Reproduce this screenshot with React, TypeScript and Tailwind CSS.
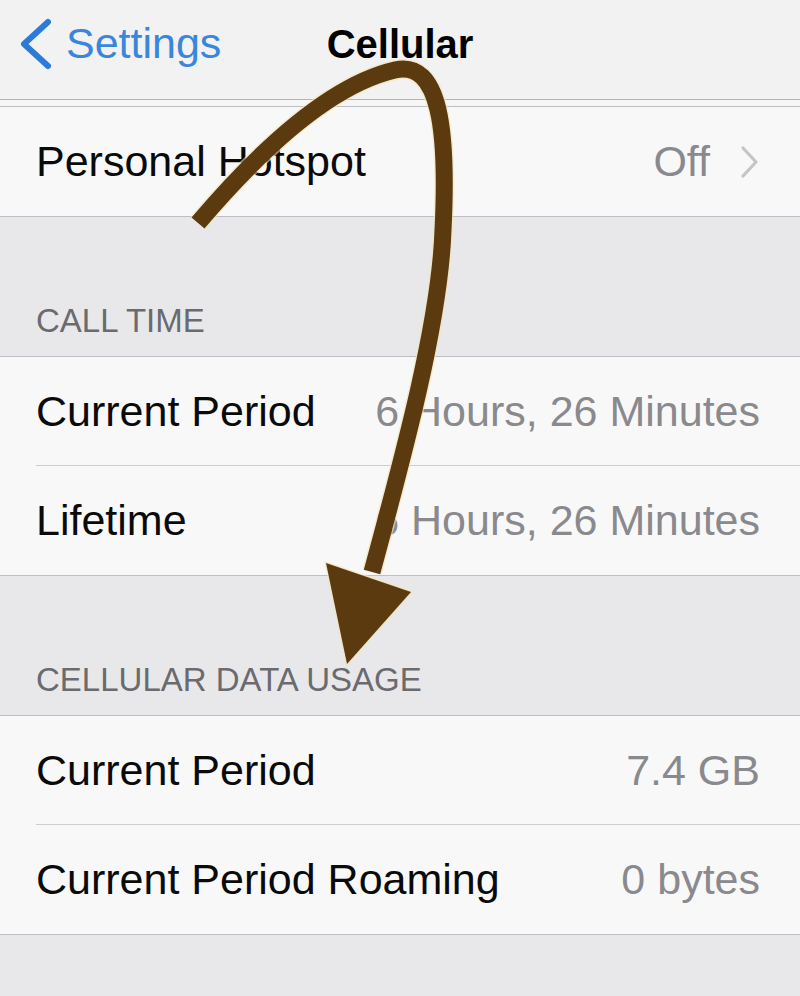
import React from "react";

function Row({
  label,
  value,
  chevron,
  last,
}: {
  label: string;
  value: string;
  chevron?: boolean;
  last?: boolean;
}) {
  return (
    <div className="pl-[36px]">
      <div
        className={
          "h-[109px] pr-[40px] flex items-center justify-between " +
          (last ? "" : "border-b border-[#cdcdd1]")
        }
      >
        <span className="text-[43px] text-[#0a0a0a] leading-none">{label}</span>
        <div className="flex items-center">
          <span className="text-[43px] text-[#89898e] leading-none">{value}</span>
          {chevron && (
            <svg width="20" height="34" viewBox="0 0 20 34" className="ml-[30px]">
              <path
                d="M3 3 L16 17 L3 31"
                fill="none"
                stroke="#c4c4c9"
                strokeWidth="3.2"
                strokeLinecap="round"
                strokeLinejoin="round"
              />
            </svg>
          )}
        </div>
      </div>
    </div>
  );
}

function Header({ title }: { title: string }) {
  return (
    <div className="h-[139px] flex items-end px-[36px] pb-[17px]">
      <span className="text-[33px] leading-[36px] text-[#6a6a6f]">{title}</span>
    </div>
  );
}

export default function App() {
  return (
    <div
      className="relative w-[800px] h-[996px] overflow-hidden bg-[#e8e8ea]"
      style={{ fontFamily: '"Liberation Sans", Arial, sans-serif' }}
    >
      {/* Nav bar */}
      <div className="h-[100px] bg-[#f2f2f2] border-b border-[#b4b4b6] grid grid-cols-[1fr_auto_1fr] items-center pb-[12px]">
        <div className="flex items-center pl-[18px]">
          <svg width="36" height="52" viewBox="0 0 36 52">
            <path
              d="M30 4 L6 26 L30 48"
              fill="none"
              stroke="#2c7bd9"
              strokeWidth="6"
              strokeLinecap="round"
              strokeLinejoin="round"
            />
          </svg>
          <span className="ml-[12px] text-[43px] leading-none text-[#3a86dc]">Settings</span>
        </div>
        <span className="text-[40px] font-bold leading-none text-black">Cellular</span>
        <div />
      </div>
      <div className="h-[6px] bg-[#f6f6f6]" />

      {/* Group 1 */}
      <div className="bg-[#f8f8f8] border-y border-[#bfbfc3]">
        <Row label="Personal Hotspot" value="Off" chevron last />
      </div>

      <Header title="CALL TIME" />
      <div className="bg-[#f8f8f8] border-y border-[#bfbfc3]">
        <Row label="Current Period" value="6 Hours, 26 Minutes" />
        <Row label="Lifetime" value="6 Hours, 26 Minutes" last />
      </div>

      <Header title="CELLULAR DATA USAGE" />
      <div className="bg-[#f8f8f8] border-y border-[#bfbfc3]">
        <Row label="Current Period" value="7.4 GB" />
        <Row label="Current Period Roaming" value="0 bytes" last />
      </div>

      {/* Annotation arrow overlay */}
      <svg
        className="absolute inset-0 pointer-events-none"
        width="800"
        height="996"
        viewBox="0 0 800 996"
      >
        <path
          d="M198 223 C260 150, 330 85, 395 70 C440 60, 448 130, 443 230 C440 320, 405 450, 372 572"
          fill="none"
          stroke="#f3e4b4"
          strokeWidth="20"
          strokeOpacity="0.6"
        />
        <polygon points="326,563 411,592 347,664" fill="#f3e4b4" fillOpacity="0.6" stroke="#f3e4b4" strokeOpacity="0.6" strokeWidth="3" />
        <path
          d="M198 223 C260 150, 330 85, 395 70 C440 60, 448 130, 443 230 C440 320, 405 450, 372 572"
          fill="none"
          stroke="#5b3a10"
          strokeWidth="17"
        />
        <polygon points="326,563 411,592 347,664" fill="#5b3a10" />
      </svg>
    </div>
  );
}
